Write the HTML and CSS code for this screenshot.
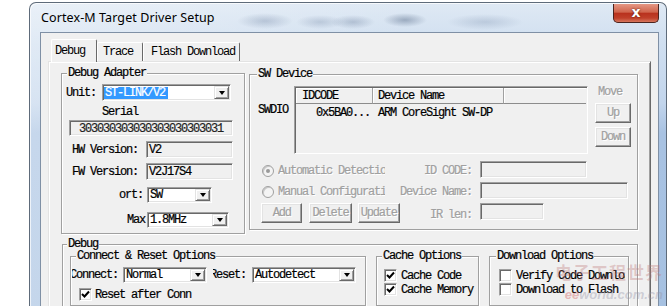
FILE: index.html
```html
<!DOCTYPE html>
<html lang="en">
<head>
    <meta charset="UTF-8">
    <meta name="viewport" content="width=device-width, initial-scale=1.0">
    <title>Cortex-M Target Driver Setup</title>
    <link rel="stylesheet" href="styles.css">
</head>
<body>

    <div class="window">
        <div class="titlebar">
            <span class="title">Cortex-M Target Driver Setup</span>
            <span class="close">x</span>
        </div>

        <div class="client">
            <div class="tabs">
                <span class="tab tab-debug active">Debug</span>
                <span class="tab tab-trace">Trace</span>
                <span class="tab tab-flash">Flash Download</span>
            </div>

            <div class="panel">
                <div class="top-row">

                    <!-- Debug adapter -->
                    <fieldset class="group adapter">
                        <legend>Debug Adapter</legend>
                        <div class="row unit-row">
                            <span class="lbl lbl-unit">Unit:</span>
                            <div class="combo unit-combo"><span class="val selected">ST-LINK/V2</span><span class="drop"></span></div>
                        </div>
                        <div class="serial-lbl">Serial</div>
                        <div class="field serial">303030303030303030303031</div>
                        <div class="row ver-row">
                            <span class="lbl lbl-ver">HW Version:</span>
                            <div class="field ver-field">V2</div>
                        </div>
                        <div class="row ver-row">
                            <span class="lbl lbl-ver">FW Version:</span>
                            <div class="field ver-field">V2J17S4</div>
                        </div>
                        <div class="row port-row">
                            <span class="lbl lbl-port">ort:</span>
                            <div class="combo port-combo"><span class="val">SW</span><span class="drop"></span></div>
                        </div>
                        <div class="row max-row">
                            <span class="lbl lbl-max">Max</span>
                            <div class="combo max-combo"><span class="val">1.8MHz</span><span class="drop"></span></div>
                        </div>
                    </fieldset>

                    <!-- SW device -->
                    <fieldset class="group device">
                        <legend>SW Device</legend>
                        <div class="dev-top">
                            <span class="swdio">SWDIO</span>
                            <div class="list">
                                <div class="list-head">
                                    <span class="col-id">IDCODE</span>
                                    <span class="col-name">Device Name</span>
                                    <span class="col-rest"></span>
                                </div>
                                <div class="list-row">
                                    <span class="col-id">0x5BA0...</span>
                                    <span class="col-name">ARM CoreSight SW-DP</span>
                                </div>
                            </div>
                            <div class="move-col">
                                <span class="move">Move</span>
                                <button class="btn btn-up" disabled>Up</button>
                                <button class="btn btn-down" disabled>Down</button>
                            </div>
                        </div>
                        <div class="dev-grid">
                            <span class="radio"><span class="dot on"></span><span class="clip">Automatic Detection</span></span>
                            <span class="dlbl">ID CODE:</span>
                            <span class="field dis id-field"></span>

                            <span class="radio"><span class="dot"></span><span class="clip">Manual Configuration</span></span>
                            <span class="dlbl">Device Name:</span>
                            <span class="field dis name-field"></span>

                            <div class="btn-row">
                                <button class="btn btn-add" disabled>Add</button>
                                <button class="btn btn-del" disabled>Delete</button>
                                <button class="btn btn-upd" disabled>Update</button>
                            </div>
                            <span class="dlbl">IR len:</span>
                            <span class="field dis ir-field"></span>
                        </div>
                    </fieldset>
                </div>

                <!-- Debug options -->
                <fieldset class="group debug">
                    <legend>Debug</legend>
                    <div class="debug-row">
                        <fieldset class="group connect">
                            <legend>Connect &amp; Reset Options</legend>
                            <div class="row conn-row">
                                <span class="cut cut-conn">Connect:</span>
                                <div class="combo normal-combo"><span class="val">Normal</span><span class="drop"></span></div>
                                <span class="cut cut-reset">Reset:</span>
                                <div class="combo auto-combo"><span class="val">Autodetect</span><span class="drop"></span></div>
                            </div>
                            <div class="check reset-check">
                                <span class="box"><svg width="9" height="9" viewBox="0 0 9 9"><path d="M1 4 L3.5 6.5 L8 1.5" fill="none" stroke="#000" stroke-width="2"/></svg></span>
                                <span>Reset after Conn</span>
                            </div>
                        </fieldset>

                        <fieldset class="group cache">
                            <legend>Cache Options</legend>
                            <div class="checks">
                                <div class="check">
                                    <span class="box"><svg width="9" height="9" viewBox="0 0 9 9"><path d="M1 4 L3.5 6.5 L8 1.5" fill="none" stroke="#000" stroke-width="2"/></svg></span>
                                    <span>Cache Code</span>
                                </div>
                                <div class="check">
                                    <span class="box"><svg width="9" height="9" viewBox="0 0 9 9"><path d="M1 4 L3.5 6.5 L8 1.5" fill="none" stroke="#000" stroke-width="2"/></svg></span>
                                    <span>Cache Memory</span>
                                </div>
                            </div>
                        </fieldset>

                        <fieldset class="group download">
                            <legend>Download Options</legend>
                            <div class="checks">
                                <div class="check">
                                    <span class="box"></span>
                                    <span class="clip-dl">Verify Code Download</span>
                                </div>
                                <div class="check">
                                    <span class="box"></span>
                                    <span>Download to Flash</span>
                                </div>
                            </div>
                        </fieldset>
                    </div>
                </fieldset>
            </div>
        </div>
    </div>

    <!-- watermark -->
    <div class="watermark">
        <span class="wm-cn">电子工程世界</span>
        <span class="wm-en"><b>ee</b>world.com.cn</span>
    </div>

</body>
</html>
```

FILE: styles.css
```css
/* Page */
body {
    margin: 0;
    width: 669px;
    height: 306px;
    overflow: hidden;
    background: #fff;
    font-family: "Liberation Mono", monospace;
    font-size: 12px;
    line-height: 12px;
    letter-spacing: -1.2px;
    color: #000;
}

/* Window frame */
.window {
    margin: 2px 0 0 29px;
    width: 638px;
    height: 330px;
    box-sizing: border-box;
    border: 1px solid #5e6b7a;
    border-bottom: 0;
    border-radius: 7px 7px 0 0;
    padding: 0 7px 0 10px;
    box-shadow: inset 1px 1px rgba(255, 255, 255, 0.7);
    background:
        radial-gradient(ellipse 28px 8px at 235px 18px, rgba(110, 130, 160, 0.35), transparent),
        radial-gradient(ellipse 24px 7px at 290px 19px, rgba(110, 130, 160, 0.3), transparent),
        radial-gradient(ellipse 22px 7px at 323px 19px, rgba(100, 120, 150, 0.35), transparent),
        radial-gradient(ellipse 22px 7px at 375px 17px, rgba(80, 100, 130, 0.45), transparent),
        radial-gradient(ellipse 38px 8px at 455px 19px, rgba(120, 140, 170, 0.3), transparent),
        linear-gradient(to right, rgba(255, 255, 255, 0.35), rgba(255, 255, 255, 0) 60%),
        linear-gradient(#dfe9f4 0, #d0dff0 40px, #c2d5ec 100px, #a8c2e2 130px, #a6c1e1 100%);
}

.titlebar {
    height: 29px;
    display: flex;
    justify-content: space-between;
    align-items: center;
}

.title {
    margin-left: 1px;
    font-family: "Noto Sans", sans-serif;
    font-size: 12.5px;
    letter-spacing: 0.1px;
    color: #000;
}

.close {
    align-self: flex-start;
    margin-top: 1px;
    width: 46px;
    height: 19px;
    box-sizing: border-box;
    border: 1px solid #4a2420;
    border-top: 0;
    border-radius: 0 0 5px 5px;
    background-color: #c8452f;
    background-image: linear-gradient(#e59784, #d0654d 45%, #b9321e 52%, #c0402a 78%, #d7775e);
    color: #fff;
    font-family: "DejaVu Sans", sans-serif;
    font-size: 14px;
    font-weight: bold;
    line-height: 17px;
    letter-spacing: 0;
    text-align: center;
    text-shadow: 0 0 2px #4a1208;
}

/* Client area */
.client {
    height: 300px;
    box-sizing: border-box;
    border: 1px solid #7f90a5;
    background: #f0f0f0;
    padding: 6px 7px 0 7px;
}

/* Tabs */
.tabs {
    display: flex;
    align-items: flex-end;
    height: 22px;
    padding-left: 3px;
}

.tab {
    box-sizing: border-box;
    height: 19px;
    border: 1px solid;
    border-color: #fff #696969 transparent #fff;
    border-bottom: 0;
    border-radius: 2px 2px 0 0;
    padding-top: 3px;
    background: #f0f0f0;
}

.tab.active {
    position: relative;
    z-index: 1;
    height: 23px;
    margin-bottom: -1px;
    padding-top: 5px;
}

.tab-debug { width: 46px; padding-left: 3px; }
.tab-trace { width: 46px; padding-left: 5px; }
.tab-flash { width: 97px; padding-left: 7px; }

.panel {
    width: 603px;
    height: 260px;
    box-sizing: border-box;
    border: 1px solid;
    border-color: #e3e3e3 #696969 #696969 #e3e3e3;
    box-shadow: inset 1px 1px #fff, inset -1px 0 #a0a0a0;
    padding: 5px 0 0 12px;
    -webkit-text-stroke: 0.2px;
}

.top-row {
    display: flex;
    align-items: flex-start;
}

/* Group boxes */
.group {
    margin: 0;
    padding: 0;
    min-width: 0;
    box-sizing: border-box;
    border: 1px solid #a0a0a0;
    box-shadow: inset 1px 1px #fff, 1px 1px #fff;
}

.group legend {
    padding: 0 1px;
    line-height: 12px;
    background: #f0f0f0;
}

/* Controls */
.row {
    display: flex;
    align-items: center;
}

.lbl {
    box-sizing: border-box;
    white-space: nowrap;
}

.combo {
    display: flex;
    align-items: center;
    box-sizing: border-box;
    height: 17px;
    padding: 1px;
    background: #fff;
    border: 1px solid;
    border-color: #a0a0a0 #fff #fff #a0a0a0;
    box-shadow: inset 1px 1px #696969, inset -1px -1px #e3e3e3;
}

.val {
    padding-left: 1px;
    white-space: nowrap;
}

.val.selected {
    background: #3399ff;
    color: #fff;
    padding: 0 3px 0 1px;
}

.drop {
    margin-left: auto;
    width: 15px;
    height: 13px;
    box-sizing: border-box;
    background: #f0f0f0;
    border: 1px solid;
    border-color: #e3e3e3 #696969 #696969 #e3e3e3;
    box-shadow: inset 1px 1px #fff, inset -1px -1px #a0a0a0;
    display: flex;
    align-items: center;
    justify-content: center;
}

.drop::after {
    content: "";
    border-left: 3.5px solid transparent;
    border-right: 3.5px solid transparent;
    border-top: 4px solid #000;
}

.field {
    display: block;
    box-sizing: border-box;
    height: 17px;
    padding: 2px 0 0 2px;
    background: #f0f0f0;
    border: 1px solid;
    border-color: #a0a0a0 #fff #fff #a0a0a0;
    box-shadow: inset 1px 1px #696969, inset -1px -1px #e3e3e3;
    white-space: nowrap;
}

.btn {
    box-sizing: border-box;
    height: 20px;
    margin: 0;
    padding: 0;
    font: inherit;
    letter-spacing: inherit;
    line-height: 17px;
    color: #a0a0a0;
    text-shadow: 1px 1px #fff;
    background: #f0f0f0;
    border: 1px solid;
    border-color: #fff #696969 #696969 #fff;
    box-shadow: inset -1px -1px #a0a0a0, inset 1px 1px #e3e3e3;
    text-align: center;
}

/* Debug adapter */
.adapter {
    width: 184px;
    height: 167px;
}

.adapter legend { margin-left: 5px; }

.unit-row { margin-top: 5px; }
.lbl-unit { width: 40px; padding-left: 4px; }
.unit-combo { width: 129px; }

.serial-lbl {
    margin-top: 5px;
    padding-left: 40px;
}

.field.serial {
    margin: 2px 0 0 7px;
    width: 164px;
    height: 16px;
    padding: 2px 0 0;
    text-align: center;
    color: #222;
}

.ver-row { margin-top: 5px; }
.lbl-ver { width: 84px; padding-left: 10px; }
.ver-field { width: 87px; }

.port-row { margin-top: 7px; }
.lbl-port { width: 85px; padding-right: 4px; text-align: right; }
.port-combo { width: 65px; height: 16px; }

.max-row { margin-top: 9px; }
.lbl-max { width: 85px; padding-right: 2px; text-align: right; }
.max-combo { width: 82px; height: 16px; }

.port-combo .drop,
.max-combo .drop { height: 12px; }

/* SW device */
.device {
    width: 389px;
    height: 162px;
    margin: 1px 0 0 4px;
}

.device legend { margin-left: 7px; }

.dev-top {
    display: flex;
    margin-top: 6px;
}

.swdio {
    width: 44px;
    box-sizing: border-box;
    padding: 18px 0 0 8px;
}

.list {
    width: 294px;
    height: 68px;
    box-sizing: border-box;
    padding: 1px 1px 0 1px;
    border: 1px solid;
    border-color: #a0a0a0 #fff #fff #a0a0a0;
    box-shadow: inset 1px 1px #696969;
    background: #f0f0f0;
}

.list-head {
    display: flex;
    height: 16px;
}

.list-head span {
    box-sizing: border-box;
    padding: 2px 0 0;
    border-right: 1px solid #a0a0a0;
    border-bottom: 1px solid #8c8c8c;
    box-shadow: inset 1px 1px #fff;
}

.list-head .col-rest {
    flex: 1;
    border-right: 0;
}

.list-row {
    display: flex;
    margin-top: 3px;
}

.col-id {
    width: 77px;
    box-sizing: border-box;
}

.col-name {
    width: 131px;
    box-sizing: border-box;
    padding-left: 5px;
    white-space: nowrap;
}

.list-head .col-id { padding-left: 6px; }
.list-head .col-name { padding-left: 5px; }

.list-row .col-id {
    text-align: right;
    padding-right: 3px;
}

.move-col {
    display: flex;
    flex-direction: column;
    width: 36px;
    margin-left: 7px;
}

.move {
    padding-left: 3px;
    color: #a0a0a0;
    text-shadow: 1px 1px #fff;
}

.btn-up { margin-top: 5px; }
.btn-down { margin-top: 4px; }

.dev-grid {
    display: grid;
    grid-template-columns: 139px 80px 1fr;
    grid-template-rows: 17px 17px 20px;
    row-gap: 4px;
    margin-top: 7px;
    padding-left: 11px;
    color: #a0a0a0;
    text-shadow: 1px 1px #fff;
}

.radio {
    display: flex;
    align-items: center;
    padding-top: 2px;
}

.dot {
    width: 12px;
    height: 12px;
    box-sizing: border-box;
    margin: 0 4px 0 1px;
    border: 1px solid #a0a0a0;
    border-radius: 50%;
    background: #f4f4f4;
    box-shadow: inset 1px 1px #c8c8c8;
    display: flex;
    align-items: center;
    justify-content: center;
}

.dot.on::after {
    content: "";
    width: 4px;
    height: 4px;
    border-radius: 50%;
    background: #9a9a9a;
}

.clip {
    width: 107px;
    overflow: hidden;
    white-space: nowrap;
}

.dlbl {
    align-self: center;
    padding: 3px 8px 0 0;
    text-align: right;
    white-space: nowrap;
}

.id-field { width: 107px; }
.name-field { width: 148px; }
.ir-field { width: 64px; }

.btn-row {
    display: flex;
    white-space: nowrap;
}

.btn-add { width: 47px; }
.btn-del { width: 48px; margin-left: 7px; }
.btn-upd { width: 48px; margin-left: 6px; }

/* Debug options */
.debug {
    width: 576px;
    height: 72px;
    margin: 5px 0 0 1px;
}

.debug > legend {
    margin-left: 4px;
    line-height: 11px;
}

.debug-row {
    display: flex;
    align-items: flex-start;
    margin-left: 7px;
}

.connect {
    width: 296px;
    height: 56px;
}

.connect legend { margin-left: 5px; }

.conn-row { margin-top: 5px; }

.cut {
    overflow: hidden;
    white-space: nowrap;
    text-indent: -3px;
}

.cut-conn { width: 51px; margin-left: 1px; text-indent: -2px; }
.cut-reset { width: 39px; margin-left: 6px; }

.normal-combo { width: 84px; height: 16px; }
.auto-combo { width: 104px; height: 16px; }

.normal-combo .drop,
.auto-combo .drop { height: 12px; }

.check {
    display: flex;
    align-items: center;
    height: 13px;
    white-space: nowrap;
}

.box {
    width: 13px;
    height: 13px;
    box-sizing: border-box;
    margin-right: 4px;
    border: 1px solid;
    border-color: #a0a0a0 #fff #fff #a0a0a0;
    box-shadow: inset 1px 1px #696969, inset -1px -1px #e3e3e3;
    background: #fff;
    display: flex;
    align-items: center;
    justify-content: center;
}

.reset-check {
    margin: 5px 0 0 8px;
}

.reset-check .box { margin-right: 3px; }

.cache {
    width: 103px;
    height: 56px;
    margin-left: 10px;
}

.cache legend { margin-left: 5px; }

.download {
    width: 140px;
    height: 56px;
    margin-left: 10px;
}

.download legend { margin-left: 6px; }

.checks {
    display: flex;
    flex-direction: column;
    gap: 1px;
    margin-top: 7px;
}

.cache .checks { padding-left: 7px; }
.download .checks { padding-left: 9px; }

.clip-dl {
    width: 109px;
    overflow: hidden;
}

/* Watermark over the dialog */
.watermark {
    position: absolute;
    left: 545px;
    top: 262px;
    display: flex;
    flex-direction: column;
    align-items: flex-end;
    width: 118px;
    pointer-events: none;
}

.wm-cn {
    font-family: "Noto Sans CJK SC", sans-serif;
    font-size: 17px;
    font-weight: bold;
    line-height: 20px;
    letter-spacing: 1px;
    color: rgba(190, 120, 120, 0.35);
}

.wm-en {
    margin-top: 6px;
    font-family: "Liberation Sans", sans-serif;
    font-size: 13px;
    font-style: italic;
    font-weight: bold;
    line-height: 13px;
    letter-spacing: 0;
    color: rgba(150, 150, 170, 0.4);
}

.wm-en b {
    color: rgba(210, 90, 90, 0.4);
}
```
